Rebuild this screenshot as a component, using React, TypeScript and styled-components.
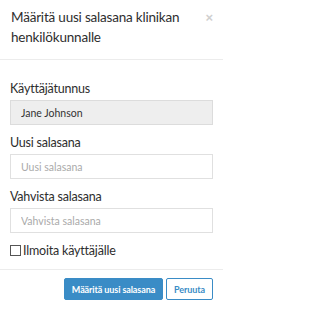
import React from "react";
import styled, { createGlobalStyle } from "styled-components";

const GlobalStyle = createGlobalStyle`
  body {
    margin: 0;
    background: #fff;
    font-family: Lato, "Open Sans", Arial, sans-serif;
    color: #333;
  }
`;

const Modal = styled.div`
  width: 223px;
  background: #fff;
`;

const Header = styled.div`
  display: flex;
  align-items: flex-start;
  padding: 8px 10px 12px 11px;
  border-bottom: 1px solid #ececec;
`;

const Title = styled.h4`
  flex: 1;
  margin: 0;
  font-size: 13.5px;
  font-weight: 400;
  line-height: 19.5px;
  letter-spacing: -0.2px;
  color: #2e2e2e;
`;

const CloseButton = styled.button`
  border: 0;
  background: none;
  padding: 0;
  margin-top: 3px;
  font-family: Arial, sans-serif;
  font-size: 13px;
  line-height: 13px;
  font-weight: 700;
  color: #d0d0d0;
  cursor: pointer;
`;

const Body = styled.div`
  padding: 20px 10px 11px 10px;
`;

const FormGroup = styled.div`
  margin-bottom: 9px;
`;

const Label = styled.label`
  display: block;
  font-size: 12.5px;
  line-height: 17px;
  letter-spacing: -0.2px;
  margin-bottom: 3px;
  color: #2e2e2e;
`;

const Input = styled.input<{ $readOnly?: boolean }>`
  box-sizing: border-box;
  display: block;
  width: 100%;
  height: 25px;
  padding: 0 10px;
  border: 1px solid ${(p) => (p.$readOnly ? "#dcdcdc" : "#e0e0e0")};
  border-radius: 0;
  background: ${(p) => (p.$readOnly ? "#eeeeee" : "#fff")};
  font-family: inherit;
  font-size: 10.5px;
  color: #333;
  outline: none;

  &::placeholder {
    color: #aaa;
  }
`;

const CheckRow = styled.label`
  display: flex;
  align-items: center;
  gap: 2px;
  margin-top: 10px;
  font-size: 12.5px;
  line-height: 15px;
  letter-spacing: -0.2px;
  color: #2e2e2e;
`;

const Box = styled.span`
  box-sizing: border-box;
  display: inline-block;
  width: 11px;
  height: 11px;
  border: 1px solid #555;
  background: #fff;
`;

const Footer = styled.div`
  display: flex;
  justify-content: flex-end;
  gap: 3px;
  padding: 8px 10px 12px;
  border-top: 1px solid #ececec;
`;

const Button = styled.button<{ $primary?: boolean }>`
  height: 22px;
  padding: 0 7px;
  border: 1px solid #3a8cc6;
  border-radius: 2px;
  background: ${(p) => (p.$primary ? "#3a8cc6" : "#fff")};
  color: ${(p) => (p.$primary ? "#fff" : "#3a8cc6")};
  font-family: inherit;
  font-size: 9px;
  font-weight: 700;
  letter-spacing: -0.1px;
  cursor: pointer;
`;

export default function App() {
  return (
    <>
      <GlobalStyle />
      <Modal>
        <Header>
          <Title>Määritä uusi salasana klinikan henkilökunnalle</Title>
          <CloseButton aria-label="Sulje">×</CloseButton>
        </Header>
        <Body>
          <FormGroup>
            <Label>Käyttäjätunnus</Label>
            <Input $readOnly readOnly value="Jane Johnson" />
          </FormGroup>
          <FormGroup>
            <Label>Uusi salasana</Label>
            <Input type="password" placeholder="Uusi salasana" />
          </FormGroup>
          <FormGroup>
            <Label>Vahvista salasana</Label>
            <Input type="password" placeholder="Vahvista salasana" />
          </FormGroup>
          <CheckRow>
            <Box />
            Ilmoita käyttäjälle
          </CheckRow>
        </Body>
        <Footer>
          <Button $primary>Määritä uusi salasana</Button>
          <Button>Peruuta</Button>
        </Footer>
      </Modal>
    </>
  );
}
